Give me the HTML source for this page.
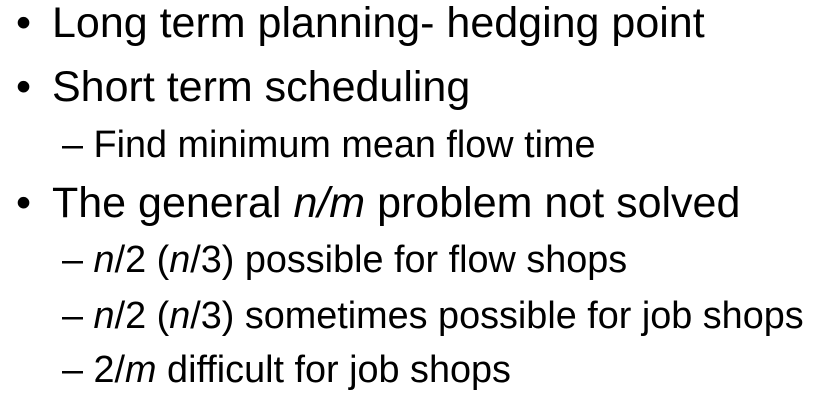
<!DOCTYPE html>
<html><head><meta charset="utf-8"><style>
body{margin:0;width:815px;height:404px;background:#fff;position:relative;overflow:hidden;font-family:"Liberation Sans",Arial,sans-serif;color:#000}
.l{position:absolute;white-space:nowrap;line-height:normal}
.b{font-size:43px}
.s{font-size:37.8px}
</style></head><body>
<div class="l b" style="left:16px;top:-1px">•</div><div class="l b" style="left:52px;top:-1px">Long term planning- hedging point</div>
<div class="l b" style="left:16px;top:63px">•</div><div class="l b" style="left:52px;top:63px">Short term scheduling</div>
<div class="l s" style="left:62px;top:124px">– Find minimum mean flow time</div>
<div class="l b" style="left:16px;top:179px">•</div><div class="l b" style="left:52px;top:179px">The general <i>n/m</i> problem not solved</div>
<div class="l s" style="left:62px;top:239px">– <i>n</i>/2 (<i>n</i>/3) possible for flow shops</div>
<div class="l s" style="left:62px;top:295px">– <i>n</i>/2 (<i>n</i>/3) sometimes possible for job shops</div>
<div class="l s" style="left:62px;top:349px">– 2/<i>m</i> difficult for job shops</div>
</body></html>
